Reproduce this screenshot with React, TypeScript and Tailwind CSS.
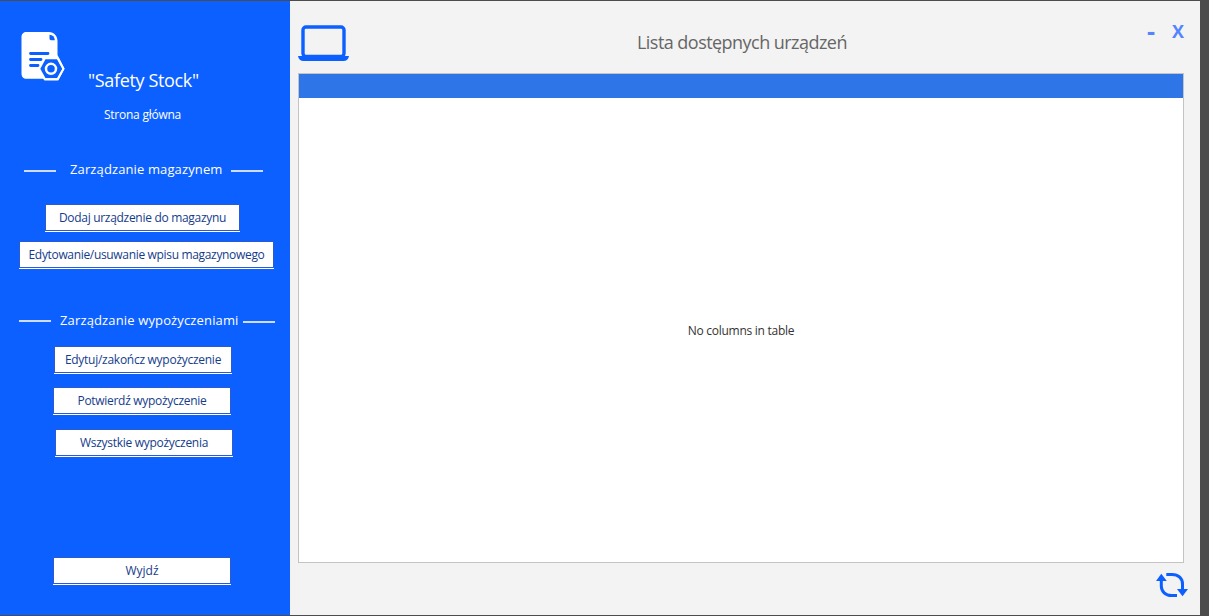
import React from "react";

type MenuButtonProps = { label: string; className: string; textClass: string };

function MenuButton({ label, className, textClass }: MenuButtonProps) {
  return (
    <button
      className={`flex h-[27px] shrink-0 items-center justify-center whitespace-nowrap border border-[#2c5bd0] bg-white pt-px text-[12px] leading-4 text-[#143c8c] ${className}`}
    >
      <span className={textClass}>{label}</span>
    </button>
  );
}

function DocumentIcon() {
  return (
    <svg className="ml-[21px] mt-[30px] h-[50px] w-11 shrink-0" viewBox="0 0 44 50">
      <path
        fill="#fff"
        d="M5.500 1H28c5 0 8.500 4 8.500 9V24L43.600 37.800L37.200 49.500H23.500L22.300 47.800H5.500C2.500 47.800.5 45.800.5 42.800V6C.5 3 2.500 1 5.500 1Z"
      />
      <path fill="#0c60ff" d="M28.500 3.800c3.200.3 5 2.200 5.400 5.400h-3.700c-1 0-1.700-.7-1.700-1.700Z" />
      <path d="M9.500 22.500H27M9.500 28.500H20M9.500 34.500H17" stroke="#0c60ff" strokeWidth="2.800" strokeLinecap="round" />
      <path fill="#0c60ff" d="M24.500 28.200H36L41.300 37.800L36 47.300H24.500L19.300 37.800Z" />
      <path d="M37 27.500L42.500 37.800L36.900 48.200H23.800L21.500 44.500" fill="none" stroke="#fff" strokeWidth="1.800" />
      <circle cx="30" cy="37.800" r="5" fill="none" stroke="#fff" strokeWidth="2.500" />
    </svg>
  );
}

function LaptopIcon() {
  return (
    <svg className="h-9 w-[51px]" viewBox="0 0 51 36">
      <rect x="5" y="2" width="41" height="29.500" rx="3" fill="none" stroke="#0c60ff" strokeWidth="3.400" />
      <path d="M0 31H51C50.500 34 48.500 36 45.500 36H5.500C2.500 36 .5 34 0 31Z" fill="#0c60ff" />
    </svg>
  );
}

function RefreshIcon() {
  return (
    <svg className="h-6 w-8" viewBox="0 0 32 24">
      <g fill="none" stroke="#0c60ff" strokeWidth="3">
        <path d="M10.300 1.500H16C22.500 1.500 26.500 5.500 26.500 11V17" />
        <path d="M5.300 7V13C5.300 18.500 9.500 22.500 15.500 22.500H21" />
      </g>
      <path fill="#0c60ff" d="M0 8L5.300.7L10.800 8ZM21 16H32L26.500 23.300Z" />
    </svg>
  );
}

export default function App() {
  return (
    <div className="flex h-[616px] w-[1209px] overflow-hidden bg-[#4c4c4c] py-px font-['Open_Sans','Noto_Sans',sans-serif]">
      <aside className="flex w-[290px] shrink-0 flex-col bg-[#0c60ff] text-white">
        <DocumentIcon />
        <h1 className="-mt-[13px] ml-[88px] self-start whitespace-nowrap text-[18px] leading-6 tracking-[-0.35px]">
          "Safety Stock"
        </h1>
        <a className="ml-[104px] mt-[15px] self-start whitespace-nowrap text-[12px] leading-4 tracking-[-0.25px]">
          Strona główna
        </a>

        <div className="ml-6 mt-[36px] flex h-6 items-center whitespace-nowrap text-[13px]">
          <i className="h-[2px] w-8 shrink-0 bg-[#cfdcf8]" />
          <span className="ml-[14px] w-[161px] pb-1 leading-5 tracking-[0.12px]">Zarządzanie magazynem</span>
          <i className="h-[2px] w-8 shrink-0 bg-[#cfdcf8]" />
        </div>
        <MenuButton
          label="Dodaj urządzenie do magazynu"
          className="ml-[45px] mt-[21px] w-[195px] shadow-[0_1px_0_#ffffff]"
          textClass="tracking-[-0.3px]"
        />
        <MenuButton
          label="Edytowanie/usuwanie wpisu magazynowego"
          className="ml-[19px] mt-[10px] w-[255px] shadow-[0_1px_0_#ffffff]"
          textClass="tracking-[-0.33px]"
        />

        <div className="ml-[19px] mt-[41px] flex h-6 items-center whitespace-nowrap text-[13px]">
          <i className="h-[2px] w-8 shrink-0 bg-[#cfdcf8]" />
          <span className="ml-[9px] w-[183px] pb-[3px] leading-5 tracking-[0.14px]">Zarządzanie wypożyczeniami</span>
          <i className="mt-[2px] h-[2px] w-8 shrink-0 bg-[#cfdcf8]" />
        </div>
        <MenuButton
          label="Edytuj/zakończ wypożyczenie"
          className="ml-[54px] mt-[13px] w-[178px] shadow-[0_1px_0_#ffffff]"
          textClass="tracking-[-0.27px]"
        />
        <MenuButton
          label="Potwierdź wypożyczenie"
          className="ml-[53px] mt-[14px] w-[178px] shadow-[0_1px_0_#ffffff]"
          textClass="tracking-[-0.3px]"
        />
        <MenuButton
          label="Wszystkie wypożyczenia"
          className="ml-[55px] mt-[15px] w-[178px] shadow-[0_1px_0_#ffffff]"
          textClass="tracking-[-0.28px]"
        />
        <MenuButton
          label="Wyjdź"
          className="ml-[53px] mt-[101px] w-[178px] shadow-[0_1px_0_#ffffff]"
          textClass="tracking-normal"
        />
      </aside>

      <main className="flex w-[910px] shrink-0 flex-col bg-[#f3f3f3] pl-2">
        <header className="flex h-[72px] shrink-0">
          <div className="w-[339px] pt-[24px]">
            <LaptopIcon />
          </div>
          <h2 className="w-[509px] whitespace-nowrap pt-[29px] text-[18px] leading-6 tracking-[-0.54px] text-[#666666]">
            Lista dostępnych urządzeń
          </h2>
          <div className="flex items-start gap-[15px] pt-[17px] font-bold text-[#5484ff]">
            <button className="w-[10px] text-[25px] leading-6">-</button>
            <button className="w-[14px] pt-px text-[18px] leading-6">X</button>
          </div>
        </header>
        <section className="flex h-[490px] w-[886px] shrink-0 flex-col border border-[#c4c4c4] bg-white">
          <div className="h-6 shrink-0 bg-[#2e75e8]" />
          <div className="flex flex-1 items-center justify-center whitespace-nowrap pt-[2px] text-[12px] leading-4 tracking-[-0.26px] text-[#333333]">
            No columns in table
          </div>
        </section>
        <button className="ml-[858px] mt-[10px] h-6 w-8">
          <RefreshIcon />
        </button>
      </main>
    </div>
  );
}
